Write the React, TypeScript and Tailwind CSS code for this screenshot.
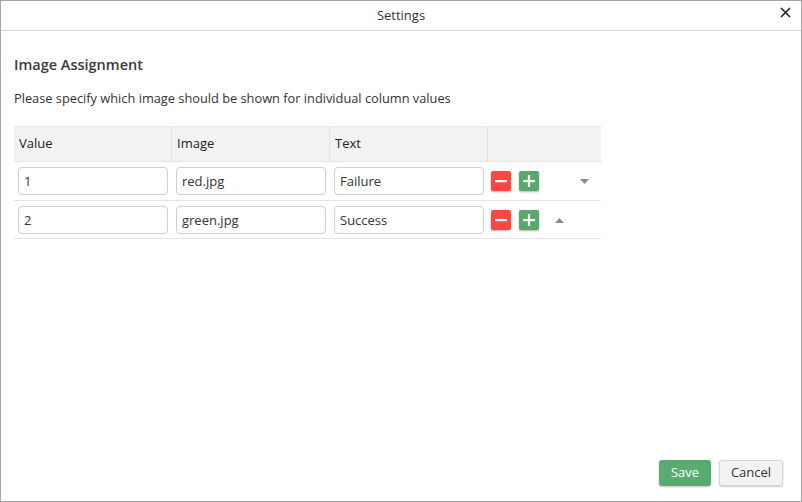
import * as React from "react";

const rows = [
  { value: "1", image: "red.jpg", text: "Failure", arrow: "down" },
  { value: "2", image: "green.jpg", text: "Success", arrow: "up" },
];

function Minus() {
  return (
    <svg width="12" height="12" viewBox="0 0 12 12">
      <rect x="0" y="5" width="12" height="2.2" fill="white" />
    </svg>
  );
}

function Plus() {
  return (
    <svg width="12" height="12" viewBox="0 0 12 12">
      <rect x="0" y="5" width="12" height="2.2" fill="white" />
      <rect x="4.9" y="0" width="2.2" height="12" fill="white" />
    </svg>
  );
}

function Field({ value }: { value: string }) {
  return (
    <input
      readOnly
      value={value}
      className="w-[150px] h-[28px] border border-[#cfcfcf] rounded-[4px] px-[5px] text-[13px] text-[#333] bg-white outline-none"
    />
  );
}

export default function App() {
  return (
    <div
      className="w-[802px] h-[502px] bg-white border border-[#a6a6a6] flex flex-col text-[#333]"
      style={{ fontFamily: '"Open Sans", "Liberation Sans", sans-serif' }}
    >
      <div className="h-[30px] border-b border-[#d4d4d4] flex items-center justify-center relative shrink-0">
        <span className="text-[13px] text-[#333]">Settings</span>
        <button className="absolute right-[10px] top-[6px] text-[#222]">
          <svg width="11" height="11" viewBox="0 0 11 11">
            <path d="M1 1L10 10M10 1L1 10" stroke="#222" strokeWidth="1.6" />
          </svg>
        </button>
      </div>

      <div className="flex-1 flex flex-col px-[13px]">
        <div className="mt-[24px] text-[14.5px] font-semibold leading-[20px] text-[#3a3a3a]">Image Assignment</div>
        <div className="mt-[14px] text-[12.8px] leading-[18px] text-[#333]">
          Please specify which image should be shown for individual column values
        </div>

        <div className="mt-[19px] w-[587px]">
          <div className="grid grid-cols-[158px_158px_158px_113px] h-[35px] bg-[#f3f3f3] border-t border-[#e8e8e8]">
            {["Value", "Image", "Text", ""].map((h, i) => (
              <div
                key={i}
                className={
                  "flex items-center px-[5px] text-[13px] text-[#222] " +
                  (i < 3 ? "border-r border-[#e3e3e3]" : "")
                }
              >
                {h}
              </div>
            ))}
          </div>
          {rows.map((r, idx) => (
            <div
              key={idx}
              className="grid grid-cols-[158px_158px_158px_59px_54px] h-[39px] border-t border-[#e5e5e5] last:border-b"
            >
              <div className="pl-[4px] pt-[5px]">
                <Field value={r.value} />
              </div>
              <div className="pl-[4px] pt-[5px]">
                <Field value={r.image} />
              </div>
              <div className="pl-[4px] pt-[5px]">
                <Field value={r.text} />
              </div>
              <div className="flex items-start gap-[8px] pl-[3px] pt-[9px]">
                <button className="w-[20px] h-[20px] rounded-[2px] bg-[#fc4646] flex items-center justify-center shadow-[0_1px_2px_rgba(0,0,0,0.3)]">
                  <Minus />
                </button>
                <button className="w-[20px] h-[20px] rounded-[2px] bg-[#57a96c] flex items-center justify-center shadow-[0_1px_2px_rgba(0,0,0,0.3)]">
                  <Plus />
                </button>
              </div>
              <div className="relative">
                {r.arrow === "down" ? (
                  <svg className="absolute left-[33px] top-[17px]" width="9" height="5" viewBox="0 0 9 5">
                    <path d="M0 0H9L4.5 5Z" fill="#8a8a8a" />
                  </svg>
                ) : (
                  <svg className="absolute left-[8px] top-[17px]" width="9" height="5" viewBox="0 0 9 5">
                    <path d="M0 5H9L4.5 0Z" fill="#8a8a8a" />
                  </svg>
                )}
              </div>
            </div>
          ))}
        </div>

        <div className="flex-1" />

        <div className="flex justify-end gap-[8px] pr-[5px] pb-[15px]">
          <button className="h-[26px] w-[52px] rounded-[3px] bg-[#5aab6f] text-white text-[13px] shadow-[0_1px_2px_rgba(0,0,0,0.25)]">
            Save
          </button>
          <button className="h-[26px] w-[64px] rounded-[3px] bg-[#f3f3f3] border border-[#d6d6d6] text-[#333] text-[13px] shadow-[0_1px_2px_rgba(0,0,0,0.2)]">
            Cancel
          </button>
        </div>
      </div>
    </div>
  );
}
